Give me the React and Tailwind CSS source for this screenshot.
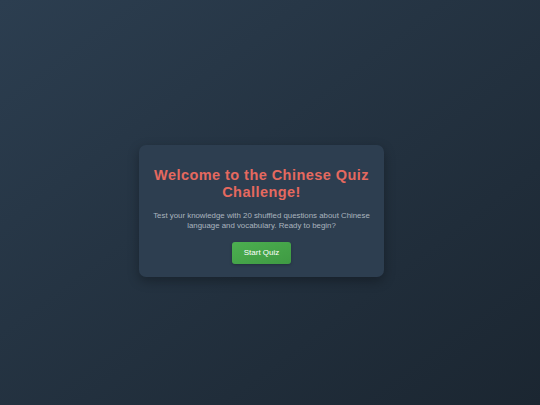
import React from 'react';

export default function App() {
  return (
    <div className="min-h-screen w-full flex items-center justify-center bg-gradient-to-br from-[#2c3e50] to-[#1b2631] pr-[17px] pt-[17px] font-['Liberation_Sans',Arial,sans-serif]">
      <div className="w-[245px] rounded-[7px] bg-[#2d3e50] px-[12px] pt-[22px] pb-[13px] text-center shadow-[0_4px_12px_rgba(0,0,0,0.3)]">
        <h1 className="text-[14.5px] leading-[17px] font-bold tracking-[0.45px] text-[#e5695f]">
          Welcome to the Chinese Quiz Challenge!
        </h1>
        <p className="mt-[10px] text-[7.85px] leading-[9.5px] text-[#aab4bf]">
          Test your knowledge with 20 shuffled questions about Chinese language and vocabulary. Ready to begin?
        </p>
        <button className="mt-[12px] h-[22px] w-[59px] rounded-[3px] bg-gradient-to-br from-[#4caf50] to-[#3f9a43] text-[8px] text-white shadow-[0_1px_3px_rgba(0,0,0,0.25)]">
          Start Quiz
        </button>
      </div>
    </div>
  );
}
